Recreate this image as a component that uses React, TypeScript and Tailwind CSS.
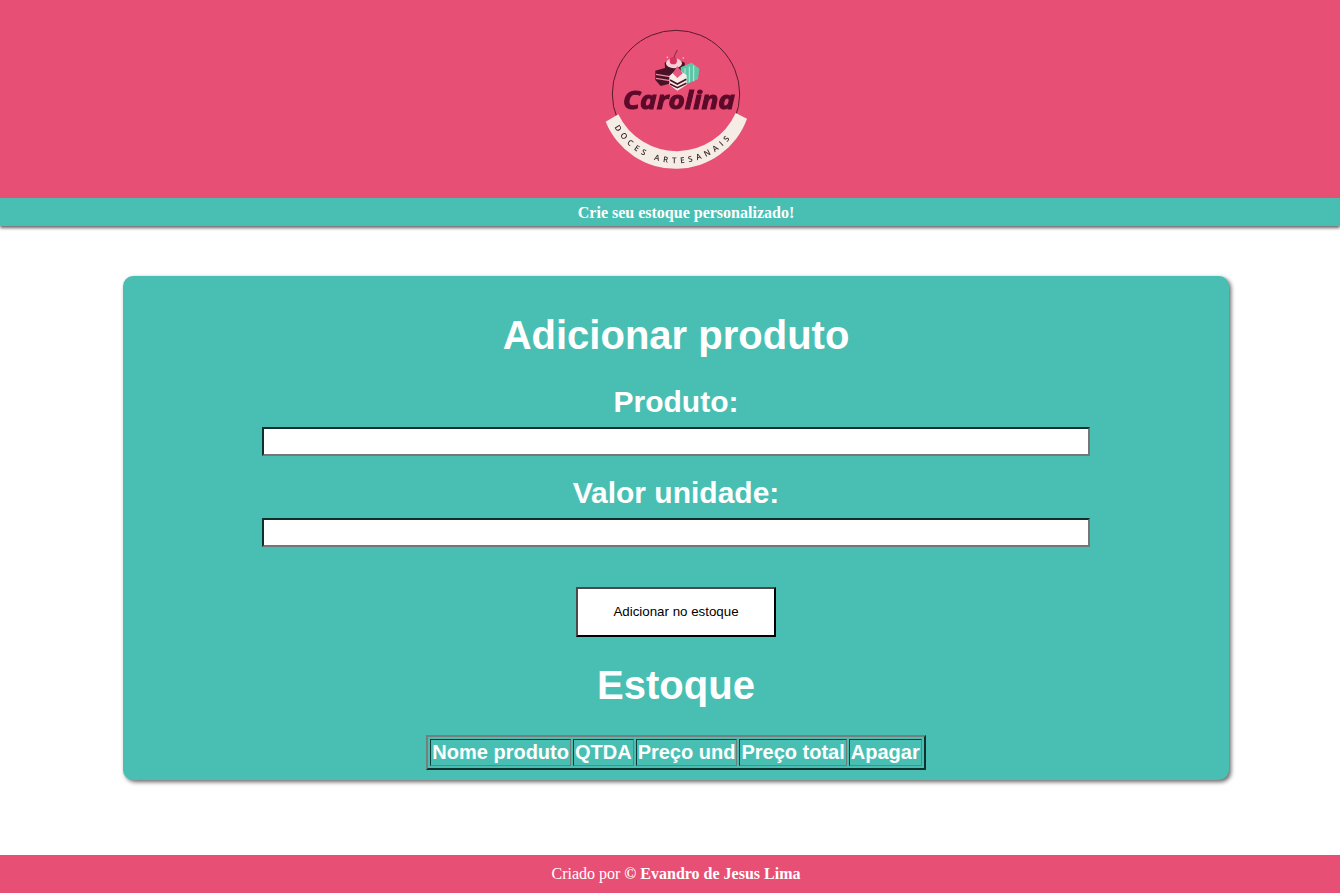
export default function App() {
  const th = "border border-[#0f3b36] border-r-[#6f7f7c] border-b-[#6f7f7c] p-px text-[20px] leading-[23px] font-bold text-white whitespace-nowrap";
  const input = "block mx-auto w-[828px] h-[29px] bg-white border-2 border-t-[#0e2f2b] border-l-[#0e2f2b] border-r-[#767676] border-b-[#767676]";
  return (
    <div className="min-h-[893px] w-[1340px] flex flex-col bg-white font-['Liberation_Sans',Arial,sans-serif]">
      <header className="h-[198px] bg-[#e84f75] pt-[20px] pl-[10px] flex justify-center items-start">
        <svg viewBox="0 0 510 465" width="170" height="155" className="blur-[0.5px]">
          <circle cx="258" cy="222" r="191" fill="none" stroke="#5a1a30" strokeWidth="3" />
          <path d="M47 305 L85 283 A194 194 0 0 0 437 279 L471 296 A227 227 0 0 1 47 305 Z" fill="#f6ece6" />
          <path id="logoArc" d="M72 320 A214 214 0 0 0 448 316" fill="none" />
          <text fontFamily="'Open Sans',sans-serif" fontWeight="600" fontSize="24" fill="#3a2a2a" letterSpacing="12">
            <textPath href="#logoArc" startOffset="2">DOCES ARTESANAIS</textPath>
          </text>
          <path d="M262 90 Q254 104 250 118" fill="none" stroke="#7a2a40" strokeWidth="3" />
          <path d="M224 128 L252 112 L284 128 L286 155 L252 172 L226 155 Z" fill="#4a1226" />
          <ellipse cx="252" cy="130" rx="24" ry="15" fill="#f6cfd6" />
          <circle cx="250" cy="122" r="11" fill="#d8335f" />
          <path d="M272 142 L305 128 L328 146 L324 178 L290 192 L272 170 Z" fill="#5fc7a8" />
          <path d="M285 145 L285 184 M298 140 L298 188 M311 136 L311 184" stroke="#bfe8da" strokeWidth="3" />
          <path d="M196 152 L232 142 L246 158 L244 190 L212 198 L196 180 Z" fill="#4a1226" />
          <path d="M198 163 L240 170 M198 175 L240 182" stroke="#f08aa5" strokeWidth="4" />
          <path d="M238 168 L262 146 L290 166 L290 194 L262 212 L238 194 Z" fill="#f7ece8" />
          <path d="M240 180 L262 192 L289 178 M240 192 L262 203 L289 190" fill="none" stroke="#4a1226" strokeWidth="5" />
          <path d="M248 160 L262 138 L278 160 L262 174 Z" fill="#e8557d" />
          <circle cx="232" cy="112" r="2.5" fill="#f6cfd6" />
          <circle cx="280" cy="114" r="2.5" fill="#f6cfd6" />
          <text x="99" y="268" textLength="336" lengthAdjust="spacingAndGlyphs" fontFamily="'Open Sans',sans-serif" fontWeight="700" fontStyle="italic" fontSize="76" fill="#5c0a2a" stroke="#5c0a2a" strokeWidth="3">Carolina</text>
        </svg>
      </header>
      <div className="h-[28px] bg-[#49bfb3] shadow-[0_2px_3px_#666666] pl-[32px] pt-px flex items-center justify-center font-['Liberation_Serif',serif] font-bold text-[16px] text-white">
        Crie seu estoque personalizado!
      </div>
      <main className="flex-1 pt-[50px] pl-[123px]">
        <section className="w-[1106px] h-[504px] bg-[#49bfb3] rounded-[10px] shadow-[2px_2px_4px_#666666] text-white text-center pt-[36px]">
          <h1 className="text-[40px] leading-[46px] font-bold">Adicionar produto</h1>
          <label className="block mt-[26px] text-[30px] leading-[35px] font-bold">Produto:</label>
          <div className="mt-[8px]"><div className={input} /></div>
          <label className="block mt-[19px] text-[30px] leading-[35px] font-bold">Valor unidade:</label>
          <div className="mt-[8px]"><div className={input} /></div>
          <button className="block mx-auto mt-[40px] w-[200px] h-[50px] bg-white text-black text-[13.33px] border-2 border-t-[#4a4a4a] border-l-[#4a4a4a] border-r-black border-b-black">
            Adicionar no estoque
          </button>
          <h2 className="mt-[25px] text-[40px] leading-[46px] font-bold">Estoque</h2>
          <div className="mt-[27px] flex justify-center">
            <table className="border-separate border-spacing-[2px] border-2 border-t-[#767f7d] border-l-[#767f7d] border-r-[#12312d] border-b-[#12312d]">
              <thead>
                <tr>
                  <th className={th}>Nome produto</th>
                  <th className={th}>QTDA</th>
                  <th className={th}>Preço und</th>
                  <th className={th}>Preço total</th>
                  <th className={th}>Apagar</th>
                </tr>
              </thead>
            </table>
          </div>
        </section>
      </main>
      <footer className="h-[38px] bg-[#e84f75] pl-[12px] flex items-center justify-center font-['Liberation_Serif',serif] text-[16px] text-white">
        <span>Criado por <strong>© Evandro de Jesus Lima</strong></span>
      </footer>
    </div>
  );
}
